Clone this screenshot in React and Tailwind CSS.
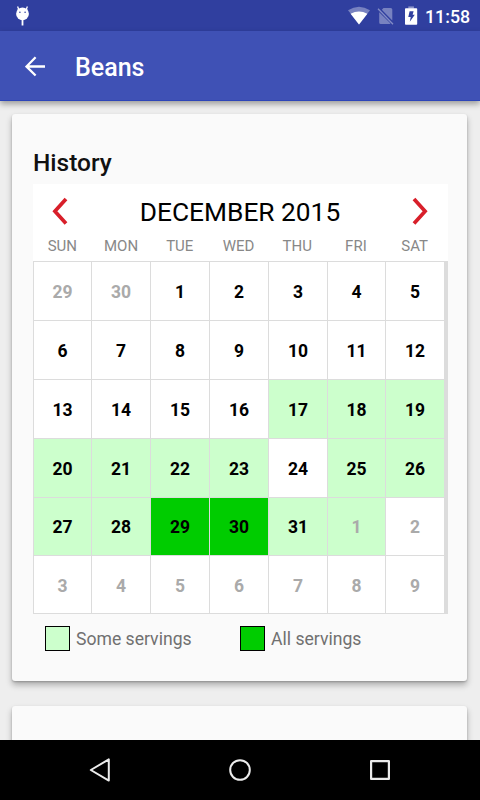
import clsx from "clsx";

const WEEKDAYS = ["SUN", "MON", "TUE", "WED", "THU", "FRI", "SAT"];

// Cell indexes, counted from Sunday 29 November 2015
const ALL_SERVINGS = [30, 31];
const SOME_SERVINGS = [18, 19, 20, 21, 22, 23, 24, 26, 27, 28, 29, 32, 33];

const DAYS = Array.from({ length: 42 }, (_, i) => {
  const date = new Date(2015, 10, 29 + i);
  return {
    day: date.getDate(),
    outside: date.getMonth() !== 11,
    some: SOME_SERVINGS.includes(i),
    all: ALL_SERVINGS.includes(i),
  };
});

function StatusBar() {
  return (
    <div className="flex h-[31px] shrink-0 items-center justify-between bg-[#303f9f] text-white">
      <svg className="ml-4 h-[31px] w-[14px]" viewBox="0 0 14 31">
        <circle cx="6.5" cy="13.8" r="6.4" fill="#fff" />
        <path d="M2.8 9.5 1.6 6.4M10.2 9.5l1.2-3.1" stroke="#fff" strokeWidth="1.3" />
        <path d="M6.5 20v5.5" stroke="#fff" strokeWidth="1.8" />
        <circle cx="3.9" cy="12.2" r="0.8" fill="#303f9f" />
        <circle cx="9.1" cy="12.2" r="0.8" fill="#303f9f" />
      </svg>
      <div className="flex items-center">
        <svg className="h-[31px] w-[72px]" viewBox="0 0 72 31">
          {/* Wi-Fi */}
          <path d="M0 10.2Q11 3.2 22 10.2L11 24.6Z" fill="#fff" opacity="0.35" />
          <path d="M2.6 13.8Q11 9.4 19.4 13.8L11 24.6Z" fill="#fff" />
          {/* No SIM */}
          <path d="M35.5 8h7.2q1.6 0 1.6 1.6v11L33.8 9.8ZM31.2 12.2 42.6 23.6q-.4.4-1 .4h-8.8q-1.6 0-1.6-1.6Z" fill="#fff" opacity="0.35" />
          <path d="M30 8.8 45 24.2" stroke="#fff" strokeWidth="1.3" opacity="0.4" />
          {/* Battery, charging */}
          <path d="M60.3 6.4h5.6v2.2h-5.6z" fill="#fff" opacity="0.45" />
          <path d="M57 9q0-.8.8-.8h10.6q.8 0 .8.8v15q0 .8-.8.8H57.8q-.8 0-.8-.8Z" fill="#fff" />
          <path d="M61.6 11.2h4l-1 3.6h2.2l-5 7 .9-4.8h-2.4Z" fill="#303f9f" />
        </svg>
        <span className="mr-[11px] ml-[5px] w-[44px] pt-[2px] text-[17.8px] leading-none font-medium whitespace-nowrap">11:58</span>
      </div>
    </div>
  );
}

function Toolbar() {
  return (
    <div className="relative flex h-[70px] shrink-0 items-center border-b border-[#2c44b8] bg-[#3f51b5] text-white shadow-[0_3px_6px_rgba(0,0,0,0.35)]">
      <button className="ml-[25px] flex">
        <svg className="h-[22px] w-[22px]" viewBox="0 0 22 22" fill="none" stroke="#fff" strokeWidth="2.3">
          <path d="M20 11.5H2M10.6 2.2 1.5 11.5l9.1 9" />
        </svg>
      </button>
      <h1 className="ml-[28px] pt-[4px] text-[25px] leading-none font-medium">Beans</h1>
    </div>
  );
}

function MonthHeader() {
  return (
    <div className="flex h-[54px] items-center justify-between pr-[19px] pl-[18px]">
      <svg className="h-[28px] w-[17px]" viewBox="0 0 17 28" fill="none" stroke="#d81f2a" strokeWidth="3.7">
        <path d="M15 1.9 3.9 14.3 15 26.5" />
      </svg>
      <span className="pt-[3px] text-[26.3px] leading-none text-black">DECEMBER 2015</span>
      <svg className="h-[28px] w-[17px]" viewBox="0 0 17 28" fill="none" stroke="#d81f2a" strokeWidth="3.7">
        <path d="M2 1.9 13.1 14.3 2 26.5" />
      </svg>
    </div>
  );
}

function Calendar() {
  return (
    <div className="w-[415px] bg-white">
      <MonthHeader />
      <div className="grid h-[23px] w-[411px] grid-cols-7 text-center text-[15px] leading-[16px] text-[#888888]">
        {WEEKDAYS.map((name) => (
          <span key={name}>{name}</span>
        ))}
      </div>
      <div className="grid h-[353px] grid-cols-[57px_58px_58px_58px_58px_57px_1fr] grid-rows-[58px_58px_58px_58px_57px_1fr] gap-px bg-[#dcdcdc] pt-px pr-[4px] pb-px pl-px">
        {DAYS.map(({ day, outside, some, all }, i) => (
          <div
            key={i}
            className={clsx(
              "flex items-center justify-center text-[17.5px] leading-none font-bold",
              i < 35 ? "pt-[3px]" : "pt-[5px]",
              outside ? "text-[#aaaaaa]" : "text-black",
              all ? "bg-[#00cc00]" : some ? "bg-[#ccffcc]" : "bg-white"
            )}
          >
            {day}
          </div>
        ))}
      </div>
    </div>
  );
}

function Legend({ label, className }) {
  return (
    <div className="flex w-[195px] items-center">
      <span className={clsx("h-[25px] w-[25px] border border-black", className)} />
      <span className="ml-[6px] pt-[3px] text-[17.6px] leading-none text-[#707070]">{label}</span>
    </div>
  );
}

function Card({ className, children }) {
  return (
    <div
      className={clsx(
        "mr-[12.6px] ml-[12.4px] shrink-0 rounded-[3px] bg-[#fafafa] shadow-[0_4px_6px_rgba(0,0,0,0.28),0_1px_2px_rgba(0,0,0,0.2)]",
        className
      )}
    >
      {children}
    </div>
  );
}

function NavBar() {
  return (
    <div className="relative flex h-[60px] shrink-0 items-center justify-center gap-[116px] bg-black">
      <svg className="h-6 w-6" viewBox="0 0 24 24" fill="none" stroke="#ececec" strokeWidth="2" strokeLinejoin="round">
        <path d="M20.8 1.4V22.6L2.8 12Z" />
      </svg>
      <svg className="h-6 w-6" viewBox="0 0 24 24" fill="none" stroke="#ececec" strokeWidth="2">
        <circle cx="12" cy="12" r="9.8" />
      </svg>
      <svg className="h-6 w-6" viewBox="0 0 24 24" fill="none" stroke="#ececec" strokeWidth="2.2" strokeLinejoin="round">
        <rect x="3.1" y="3.1" width="17.8" height="17.8" />
      </svg>
    </div>
  );
}

export default function App() {
  return (
    <div className="flex h-[800px] w-[480px] flex-col overflow-hidden bg-[#eeeeee] font-['Roboto',sans-serif]">
      <StatusBar />
      <Toolbar />
      <main className="flex min-h-0 flex-1 flex-col overflow-hidden">
        <Card className="mt-[13px] h-[567px] pt-[35px] pl-[20.6px]">
          <h2 className="h-[35px] text-[24.5px] leading-[27px] font-medium text-[#111111]">History</h2>
          <Calendar />
          <div className="mt-[12px] flex pl-[12px]">
            <Legend label="Some servings" className="bg-[#ccffcc]" />
            <Legend label="All servings" className="bg-[#00cc00]" />
          </div>
        </Card>
        <Card className="mt-[25px] h-[120px]" />
      </main>
      <NavBar />
    </div>
  );
}
